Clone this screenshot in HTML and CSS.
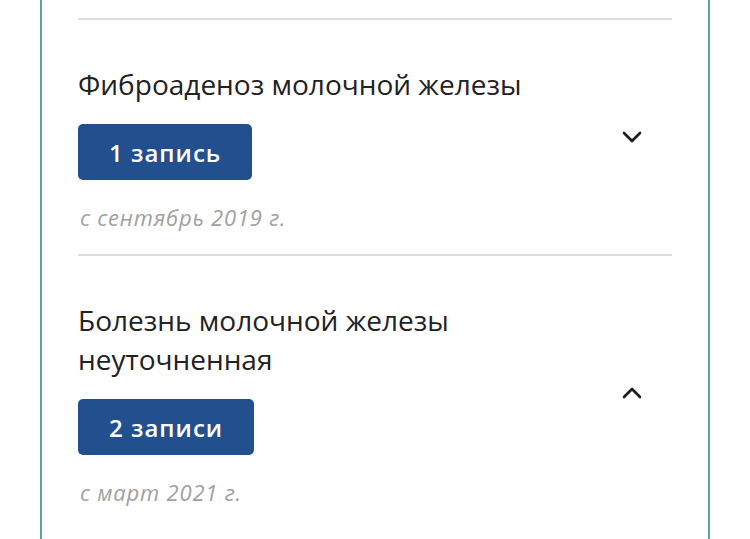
FILE: index.html
```html
<!DOCTYPE html>
<html lang="ru">
<head>
<meta charset="utf-8">
<link rel="stylesheet" href="styles.css">
</head>
<body>
<div class="panel">
  <div class="item">
    <div class="content">
      <div class="title">Фиброаденоз молочной железы</div>
      <button class="badge">1 запись</button>
      <div class="since">с сентябрь 2019 г.</div>
    </div>
    <svg class="chev" width="24" height="24" viewBox="0 0 24 24"><path d="M4 8l8 8 8-8" fill="none" stroke="#1a1a1a" stroke-width="2.6" stroke-linecap="round" stroke-linejoin="round"/></svg>
  </div>
  <div class="item">
    <div class="content">
      <div class="title">Болезнь молочной железы<br>неуточненная</div>
      <button class="badge">2 записи</button>
      <div class="since">с март 2021 г.</div>
    </div>
    <svg class="chev" width="24" height="24" viewBox="0 0 24 24"><path d="M4 16l8-8 8 8" fill="none" stroke="#1a1a1a" stroke-width="2.6" stroke-linecap="round" stroke-linejoin="round"/></svg>
  </div>
</div>
</body>
</html>
```

FILE: styles.css
```css
html, body {
  margin: 0;
  padding: 0;
  background: #fff;
  font-family: "Open Sans", "Noto Sans", sans-serif;
}
.panel {
  margin-left: 40px;
  width: 594px;
  min-height: 539px;
  border-left: 2px solid #5aa98e;
  border-right: 2px solid #5aa98e;
  padding: 18px 36px 0 36px;
}
.item {
  display: flex;
  align-items: center;
  border-top: 2px solid #dcdcdc;
}
.content {
  flex: 1;
  padding: 45px 0 22px;
}
.title {
  font-size: 28px;
  line-height: 39px;
  color: #222;
}
.badge {
  display: block;
  margin-top: 20px;
  height: 56px;
  padding: 0 31px;
  border: 0;
  border-radius: 5px;
  background: #22508f;
  color: #fff;
  font-family: inherit;
  font-size: 24px;
  font-weight: 600;
  letter-spacing: 1px;
}
.since {
  margin-top: 22px;
  padding-left: 2px;
  font-size: 22px;
  line-height: 30px;
  letter-spacing: 0.8px;
  font-style: italic;
  color: #a0a0a0;
}
.chev {
  margin-right: 28px;
}
```
